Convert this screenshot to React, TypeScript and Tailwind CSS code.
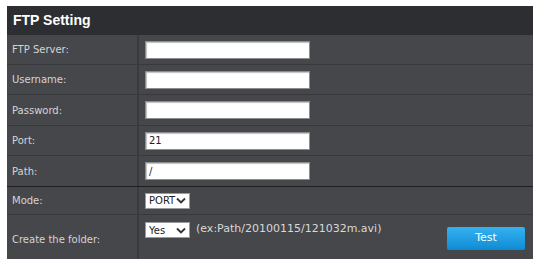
import React from "react";

const rows = [
  { label: "FTP Server:", value: "", h: "h-[30px]" },
  { label: "Username:", value: "", h: "h-[30px]" },
  { label: "Password:", value: "", h: "h-[31px]" },
  { label: "Port:", value: "21", h: "h-[30px]" },
  { label: "Path:", value: "/", h: "h-[31px]" },
];

function Chevron() {
  return (
    <svg width="10" height="7" viewBox="0 0 10 7" className="shrink-0">
      <path d="M1 1.5 L5 5.5 L9 1.5" fill="none" stroke="#333" strokeWidth="1.8" />
    </svg>
  );
}

function FakeSelect({ value }: { value: string }) {
  return (
    <div className="flex items-center justify-between w-[45px] h-[16px] bg-white border border-[#9a9a9a] px-[3px] text-[10px] text-[#222]">
      <span>{value}</span>
      <Chevron />
    </div>
  );
}

export default function App() {
  return (
    <main className="w-[537px] h-[259px] bg-white overflow-hidden pt-[6px] pl-[7px]" style={{ fontFamily: '"DejaVu Sans", Verdana, sans-serif' }}>
      <div className="w-[526px] bg-[#46474b]">
        <div className="h-[29px] bg-[#2d2e32] flex items-center pl-[6px]">
          <h1 className="text-white font-bold text-[14px]" style={{ fontFamily: '"Liberation Sans", Arial, sans-serif' }}>
            FTP Setting
          </h1>
        </div>

        {rows.map((r, i) => (
          <div
            key={r.label}
            className={`flex ${r.h} border-b ${i === rows.length - 1 ? "border-[#1f1f22]" : "border-[#38393c]"}`}
          >
            <div className="w-[132px] border-r-2 border-[#3a3b3e] flex items-center pl-[5px] text-[10px] text-[#d4d4d4]">
              {r.label}
            </div>
            <div className="flex items-center pl-[6px]">
              <div className="w-[165px] h-[18px] bg-white border border-[#8c8c8c] shadow-[inset_1px_1px_1px_rgba(0,0,0,0.25)] flex items-center pl-[3px] text-[10px] text-[#222]">
                {r.value}
              </div>
            </div>
          </div>
        ))}

        <div className="flex h-[28px] border-b border-[#38393c]">
          <div className="w-[132px] border-r-2 border-[#3a3b3e] flex items-center pl-[5px] text-[10px] text-[#d4d4d4]">
            Mode:
          </div>
          <div className="flex items-center pl-[6px]">
            <FakeSelect value="PORT" />
          </div>
        </div>

        <div className="flex h-[44px]">
          <div className="w-[132px] border-r-2 border-[#3a3b3e] flex items-center pt-[5px] pl-[5px] text-[10px] text-[#d4d4d4]">
            Create the folder:
          </div>
          <div className="flex-1 flex items-start pt-[7px] pl-[6px]">
            <FakeSelect value="Yes" />
            <span className="ml-[6px] text-[11px] text-[#d8d8d8] leading-[14px]">(ex:Path/20100115/121032m.avi)</span>
            <button className="ml-auto mr-[8px] mt-[5px] w-[78px] h-[23px] rounded-[2px] bg-gradient-to-b from-[#34b2f0] to-[#0b8bd4] text-white text-[11px]">
              Test
            </button>
          </div>
        </div>
      </div>
    </main>
  );
}
